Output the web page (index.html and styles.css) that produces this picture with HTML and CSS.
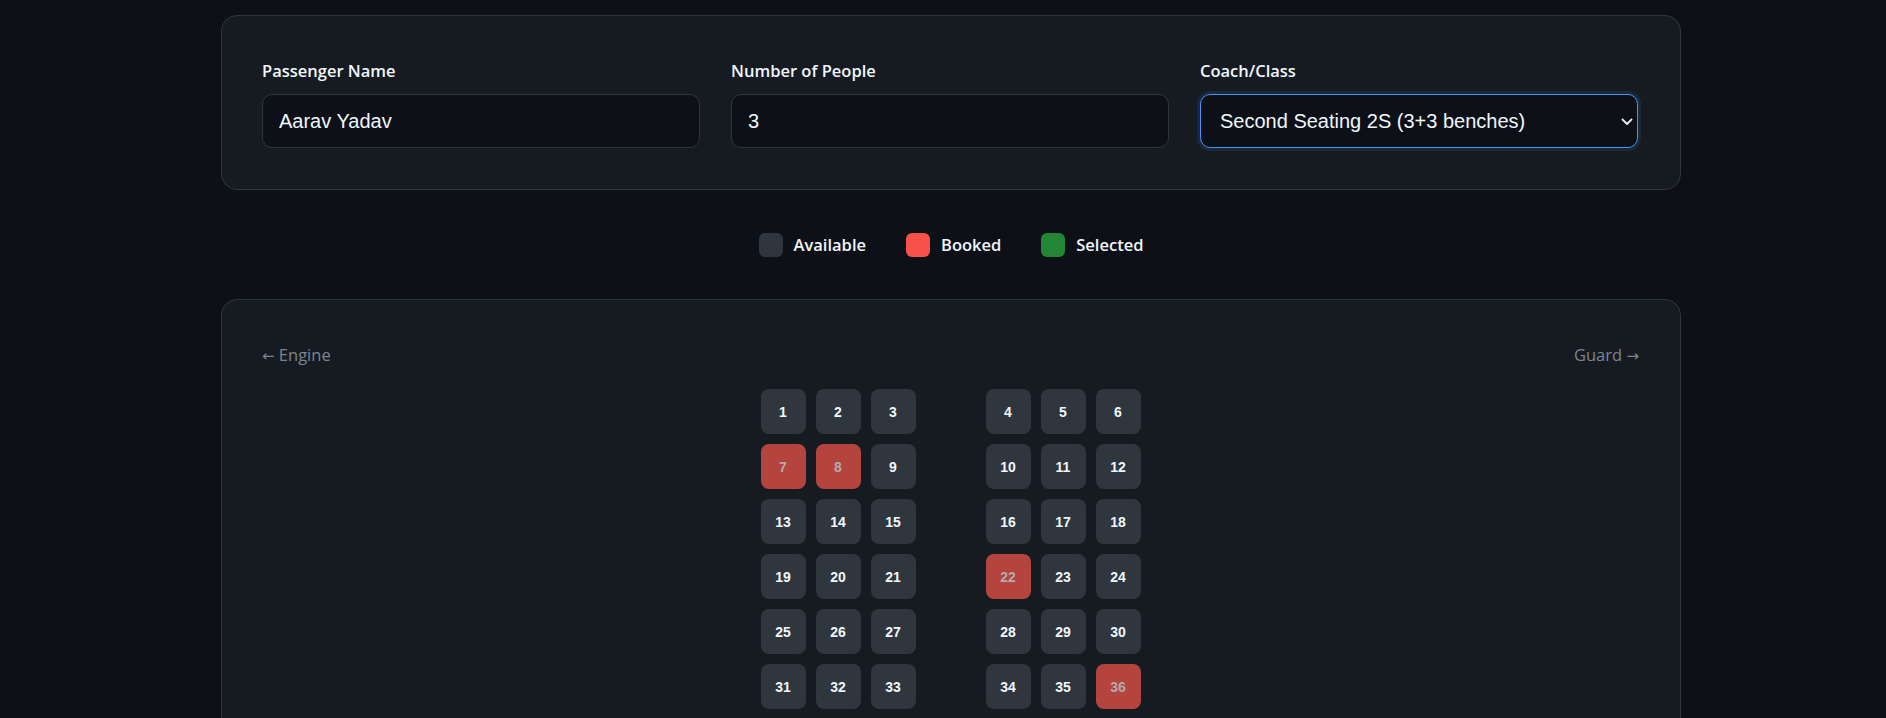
FILE: index.html
```html
<!DOCTYPE html>
<html lang="en">
<head>
<meta charset="utf-8">
<title>Seat Booking</title>
<link rel="stylesheet" href="styles.css">
</head>
<body>
<main class="page">
  <section class="card form-card">
    <div class="field">
      <label class="label" for="name">Passenger Name</label>
      <input class="control" id="name" type="text" value="Aarav Yadav">
    </div>
    <div class="field">
      <label class="label" for="count">Number of People</label>
      <input class="control" id="count" type="number" value="3">
    </div>
    <div class="field">
      <label class="label" for="coach">Coach/Class</label>
      <div class="select-wrap">
        <select class="control select" id="coach">
          <option>Second Seating 2S (3+3 benches)</option>
          <option>AC Chair Car CC (2+3)</option>
          <option>Sleeper SL</option>
        </select>
        <svg class="chevron" width="12" height="8" viewBox="0 0 12 8" aria-hidden="true"><path d="M1.5 1.5 L6 6 L10.5 1.5" fill="none" stroke="#e6edf3" stroke-width="1.8" stroke-linecap="round" stroke-linejoin="round"/></svg>
      </div>
    </div>
  </section>

  <div class="legend">
    <div class="legend-item"><span class="swatch available"></span>Available</div>
    <div class="legend-item"><span class="swatch booked"></span>Booked</div>
    <div class="legend-item"><span class="swatch selected"></span>Selected</div>
  </div>

  <section class="card coach-card">
    <div class="coach-head">
      <span><span class="arrow">&larr;</span> Engine</span>
      <span>Guard <span class="arrow">&rarr;</span></span>
    </div>
    <div class="seat-map">
      <div class="seat-row">
        <div class="bench"><div class="seat">1</div><div class="seat">2</div><div class="seat">3</div></div>
        <div class="bench"><div class="seat">4</div><div class="seat">5</div><div class="seat">6</div></div>
      </div>
      <div class="seat-row">
        <div class="bench"><div class="seat booked">7</div><div class="seat booked">8</div><div class="seat">9</div></div>
        <div class="bench"><div class="seat">10</div><div class="seat">11</div><div class="seat">12</div></div>
      </div>
      <div class="seat-row">
        <div class="bench"><div class="seat">13</div><div class="seat">14</div><div class="seat">15</div></div>
        <div class="bench"><div class="seat">16</div><div class="seat">17</div><div class="seat">18</div></div>
      </div>
      <div class="seat-row">
        <div class="bench"><div class="seat">19</div><div class="seat">20</div><div class="seat">21</div></div>
        <div class="bench"><div class="seat booked">22</div><div class="seat">23</div><div class="seat">24</div></div>
      </div>
      <div class="seat-row">
        <div class="bench"><div class="seat">25</div><div class="seat">26</div><div class="seat">27</div></div>
        <div class="bench"><div class="seat">28</div><div class="seat">29</div><div class="seat">30</div></div>
      </div>
      <div class="seat-row">
        <div class="bench"><div class="seat">31</div><div class="seat">32</div><div class="seat">33</div></div>
        <div class="bench"><div class="seat">34</div><div class="seat">35</div><div class="seat booked">36</div></div>
      </div>
    </div>
  </section>
</main>
</body>
</html>
```

FILE: styles.css
```css
html, body {
  margin: 0;
  padding: 0;
  overflow: hidden;
}

body {
  background: #0d1117;
  color: #e6edf3;
  font-family: "Open Sans", "Noto Sans", sans-serif;
  padding-left: 16px;
}

.page {
  width: 1460px;
  margin: 0 auto;
  padding-top: 15px;
  box-sizing: border-box;
}

.card {
  background: #161b22;
  border: 1px solid #30363d;
  border-radius: 16px;
  box-sizing: border-box;
}

.form-card {
  display: grid;
  grid-template-columns: repeat(3, 438px);
  column-gap: 31px;
  padding: 43px 41px 41px 40px;
}

.field {
  display: flex;
  flex-direction: column;
}

.label {
  font-size: 16.5px;
  font-weight: 600;
  line-height: 24px;
  margin-bottom: 11px;
  color: #f0f6fc;
}

.control {
  box-sizing: border-box;
  width: 100%;
  height: 54px;
  background: #0d1117;
  border: 1px solid #30363d;
  border-radius: 10px;
  color: #f0f6fc;
  font-family: "Liberation Sans", Arial, sans-serif;
  font-size: 20px;
  padding: 0 16px;
  outline: none;
  margin: 0;
}

.select-wrap {
  position: relative;
}

.select {
  appearance: none;
  -webkit-appearance: none;
  padding-left: 19px;
  border-color: #4493f8;
  box-shadow: 0 0 0 3px rgba(56, 139, 253, 0.12);
}

.chevron {
  position: absolute;
  right: 5px;
  top: 24px;
  pointer-events: none;
}

.legend {
  display: flex;
  justify-content: center;
  gap: 40px;
  margin: 43px 0 42px;
  height: 24px;
}

.legend-item {
  display: flex;
  align-items: center;
  gap: 11px;
  font-size: 16.5px;
  font-weight: 600;
  color: #f0f6fc;
  line-height: 24px;
}

.swatch {
  width: 24px;
  height: 24px;
  border-radius: 6px;
}

.swatch.available { background: #30363d; }
.swatch.booked { background: #f85149; }
.swatch.selected { background: #238636; }

.coach-card {
  padding: 41px 41px 40px 40px;
}

.coach-head {
  display: flex;
  justify-content: space-between;
  font-size: 16.5px;
  line-height: 28px;
  color: #7d8590;
  margin-bottom: 19px;
}

.arrow {
  font-family: "DejaVu Sans", sans-serif;
  font-size: 15px;
}

.seat-map {
  display: flex;
  flex-direction: column;
  align-items: center;
  gap: 10px;
}

.seat-row {
  display: flex;
  gap: 70px;
}

.bench {
  display: flex;
  gap: 10px;
}

.seat {
  width: 45px;
  height: 45px;
  border-radius: 8px;
  background: #30363d;
  color: #f0f6fc;
  font-family: "Liberation Sans", Arial, sans-serif;
  font-weight: 700;
  font-size: 14px;
  display: flex;
  align-items: center;
  justify-content: center;
}

.seat.booked {
  background: #b5443e;
  color: #b3aaaa;
}
```
